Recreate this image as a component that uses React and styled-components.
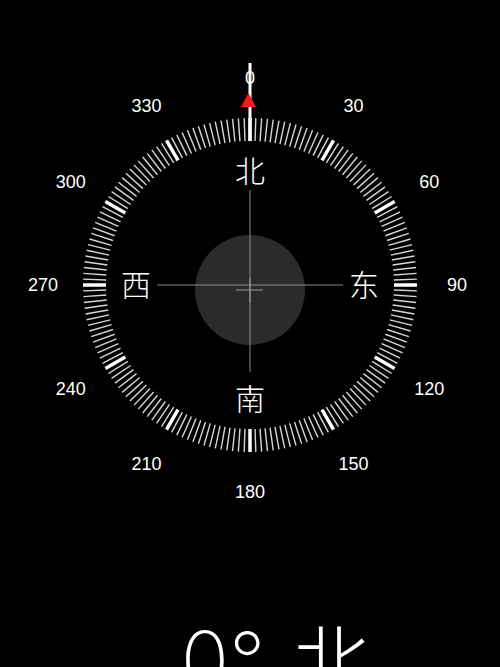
import React from 'react'
import styled, { createGlobalStyle } from 'styled-components'

const CX = 250
const CY = 285

const GlobalStyle = createGlobalStyle`
  html, body {
    margin: 0;
    padding: 0;
    background: #000;
    overflow: hidden;
  }
`

const Screen = styled.div`
  width: 500px;
  height: 667px;
  background: #000;
  display: flex;
  flex-direction: column;
  align-items: center;
  overflow: hidden;
`

const Dial = styled.svg`
  display: block;
  width: 500px;
  height: 560px;
  flex-shrink: 0;
`

const Number = styled.text`
  font-family: "Liberation Sans", Arial, sans-serif;
  font-size: 18px;
  fill: #fff;
`

const Cardinal = styled.text`
  font-family: "Noto Sans CJK SC", sans-serif;
  font-size: 30px;
  font-weight: 300;
  fill: #fff;
`

const Readout = styled.div`
  display: flex;
  align-items: baseline;
  gap: 28px;
  margin-top: 58px;
  padding-left: 50px;
  color: #fff;
  line-height: 1;
  white-space: nowrap;
`

const Degrees = styled.span`
  font-family: Inter, "Liberation Sans", sans-serif;
  font-size: 80px;
  font-weight: 200;
`

const Heading = styled.span`
  font-family: "Noto Sans CJK SC", sans-serif;
  font-size: 76px;
  font-weight: 200;
`

const polar = (deg, r) => {
  const a = (deg * Math.PI) / 180
  return [CX + r * Math.sin(a), CY - r * Math.cos(a)]
}

const ticks = Array.from({ length: 180 }, (_, i) => i * 2)
const numbers = [0, 30, 60, 90, 120, 150, 180, 210, 240, 270, 300, 330]
const cardinals = [
  { deg: 0, label: '北' },
  { deg: 90, label: '东' },
  { deg: 180, label: '南' },
  { deg: 270, label: '西' },
]

const Compass = () => (
  <Dial viewBox="0 0 500 560">
    <circle cx={CX} cy={CY + 5} r={55} fill="#2b2b2b" />

    {ticks.map((deg) => {
      const major = deg % 30 === 0
      const [x1, y1] = polar(deg, 144)
      const [x2, y2] = polar(deg, 167)
      return (
        <line
          key={deg}
          x1={x1}
          y1={y1}
          x2={x2}
          y2={y2}
          stroke={major ? '#fff' : '#d6d6d6'}
          strokeWidth={major ? 3.5 : 1.4}
        />
      )
    })}

    {numbers.map((deg) => {
      const [x, y] = polar(deg, 207)
      return (
        <Number key={deg} x={x} y={y} textAnchor="middle" dominantBaseline="central">
          {deg}
        </Number>
      )
    })}

    {cardinals.map(({ deg, label }) => {
      const [x, y] = polar(deg, 114)
      return (
        <Cardinal key={label} x={x} y={y - 2} textAnchor="middle" dominantBaseline="central">
          {label}
        </Cardinal>
      )
    })}

    {/* crosshair */}
    <line x1={CX} y1={190} x2={CX} y2={372} stroke="#8a8a8a" strokeWidth={1} />
    <line x1={157} y1={CY} x2={343} y2={CY} stroke="#8a8a8a" strokeWidth={1} />
    <line x1={CX} y1={CY - 7} x2={CX} y2={CY + 18} stroke="#9a9a9a" strokeWidth={1} />
    <line x1={CX - 14} y1={CY + 5} x2={CX + 13} y2={CY + 5} stroke="#9a9a9a" strokeWidth={1} />

    {/* heading needle */}
    <line x1={CX} y1={63} x2={CX} y2={141} stroke="#fff" strokeWidth={3} />
    <polygon points={`${CX - 1.5},93 ${CX + 6},107 ${CX - 9},107`} fill="#f21a1a" />
  </Dial>
)

const App = () => (
  <>
    <GlobalStyle />
    <Screen>
      <Compass />
      <Readout>
        <Degrees>0°</Degrees>
        <Heading>北</Heading>
      </Readout>
    </Screen>
  </>
)

export default App
